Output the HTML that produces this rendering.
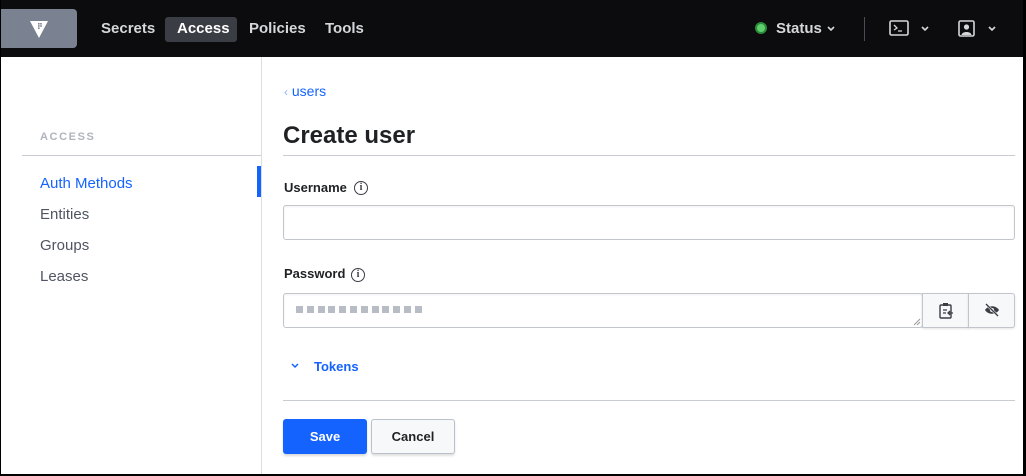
<!DOCTYPE html>
<html><head><style>
*{box-sizing:border-box;margin:0;padding:0}
body{width:1026px;height:476px;overflow:hidden;background:#fff;font-family:"Liberation Sans",sans-serif;position:relative}
.a{position:absolute}
.nav{left:0;top:0;width:1026px;height:57px;background:#0c0c0e}
.navt{color:#d5d7db;font-size:15px;font-weight:bold;top:20px}
.side{color:#4f5561;font-size:15px;left:40px}
.lbl{font-size:13px;font-weight:bold;color:#1f2124;left:284px}
.info{width:14px;height:14px;border:1.3px solid #3b3d45;border-radius:50%;font-size:10px;font-weight:bold;text-align:center;line-height:11px;color:#3b3d45;font-family:"Liberation Serif",serif}
.inp{border:1px solid #c2c5cb;border-radius:3px;background:#fff;box-shadow:inset 0 1px 2px rgba(0,0,0,.06)}
</style></head><body>
<div class="a nav"></div>
<div class="a" style="left:0;top:9px;width:77px;height:39px;background:#7a8291;border-radius:0 4px 4px 0"></div>
<svg class="a" style="left:29px;top:19px" width="20" height="20" viewBox="0 0 20 20"><path d="M1 2H19L10 19Z" fill="#fff"/><g fill="#7a8291"><rect x="9" y="4" width="1.6" height="1.6"/><rect x="11.2" y="4" width="1.6" height="1.6"/><rect x="9" y="6.2" width="1.6" height="1.6"/><rect x="11.2" y="6.2" width="1.6" height="1.6"/><rect x="9" y="8.4" width="1.6" height="1.6"/></g></svg>
<div class="a navt" style="left:101px">Secrets</div>
<div class="a" style="left:165px;top:17px;width:72px;height:25px;background:#3b3d45;border-radius:3px"></div>
<div class="a navt" style="left:177px;color:#fff">Access</div>
<div class="a navt" style="left:249px">Policies</div>
<div class="a navt" style="left:325px">Tools</div>
<div class="a" style="left:755px;top:22px;width:12px;height:12px;border-radius:50%;background:#5fcf6e;border:2px solid #2c8b3a"></div>
<div class="a navt" style="left:776px">Status</div>
<svg class="a" style="left:826px;top:25px" width="10" height="8"><path d="M2 2L5 5L8 2" stroke="#d5d7db" stroke-width="1.6" fill="none"/></svg>
<div class="a" style="left:864px;top:17px;width:1px;height:24px;background:#4a4d55"></div>
<svg class="a" style="left:889px;top:20px" width="20" height="17"><rect x="1" y="1" width="18" height="14" rx="1.5" stroke="#d5d7db" stroke-width="1.6" fill="none"/><path d="M5 5L8 8L5 10M9 11H13" stroke="#d5d7db" stroke-width="1.3" fill="none"/></svg>
<svg class="a" style="left:920px;top:25px" width="10" height="8"><path d="M2 2L5 5L8 2" stroke="#d5d7db" stroke-width="1.6" fill="none"/></svg>
<svg class="a" style="left:958px;top:20px" width="17" height="17"><rect x="1" y="1" width="15" height="15" rx="1.5" stroke="#d5d7db" stroke-width="1.6" fill="none"/><circle cx="8.5" cy="7" r="2.6" fill="#d5d7db"/><path d="M3.5 15C4 11 13 11 13.5 15Z" fill="#d5d7db"/></svg>
<svg class="a" style="left:987px;top:25px" width="10" height="8"><path d="M2 2L5 5L8 2" stroke="#d5d7db" stroke-width="1.6" fill="none"/></svg>

<div class="a" style="left:261px;top:57px;width:1px;height:419px;background:#dcdee2"></div>
<div class="a" style="left:40px;top:131px;font-size:11px;font-weight:bold;letter-spacing:1.6px;color:#b0b4bc">ACCESS</div>
<div class="a" style="left:22px;top:155px;width:239px;height:1px;background:#c9ccd2"></div>
<div class="a side" style="top:175px;color:#1563ff">Auth Methods</div>
<div class="a" style="left:257px;top:166px;width:4px;height:31px;background:#1563ff"></div>
<div class="a side" style="top:206px">Entities</div>
<div class="a side" style="top:237px">Groups</div>
<div class="a side" style="top:268px">Leases</div>

<div class="a" style="left:284px;top:83px;font-size:14px;color:#1563ff"><span style="color:#8ab1ff;font-size:12px">‹</span> users</div>
<div class="a" style="left:283px;top:122px;font-size:24px;font-weight:bold;color:#1f2124">Create user</div>
<div class="a" style="left:283px;top:155px;width:732px;height:1px;background:#c9ccd2"></div>
<div class="a lbl" style="top:180px">Username</div>
<div class="a info" style="left:354px;top:181px">i</div>
<div class="a inp" style="left:283px;top:205px;width:732px;height:35px"></div>
<div class="a lbl" style="top:266px">Password</div>
<div class="a info" style="left:351px;top:268px">i</div>
<div class="a inp" style="left:283px;top:293px;width:640px;height:35px"></div>
<div class="a" style="left:296px;top:306px;font-size:0">
<span style="display:inline-block;width:7px;height:7px;background:#b8bcc4;margin-right:3.8px"></span><span style="display:inline-block;width:7px;height:7px;background:#b8bcc4;margin-right:3.8px"></span><span style="display:inline-block;width:7px;height:7px;background:#b8bcc4;margin-right:3.8px"></span><span style="display:inline-block;width:7px;height:7px;background:#b8bcc4;margin-right:3.8px"></span><span style="display:inline-block;width:7px;height:7px;background:#b8bcc4;margin-right:3.8px"></span><span style="display:inline-block;width:7px;height:7px;background:#b8bcc4;margin-right:3.8px"></span><span style="display:inline-block;width:7px;height:7px;background:#b8bcc4;margin-right:3.8px"></span><span style="display:inline-block;width:7px;height:7px;background:#b8bcc4;margin-right:3.8px"></span><span style="display:inline-block;width:7px;height:7px;background:#b8bcc4;margin-right:3.8px"></span><span style="display:inline-block;width:7px;height:7px;background:#b8bcc4;margin-right:3.8px"></span><span style="display:inline-block;width:7px;height:7px;background:#b8bcc4;margin-right:3.8px"></span><span style="display:inline-block;width:7px;height:7px;background:#b8bcc4;margin-right:3.8px"></span>
</div>
<svg class="a" style="left:913px;top:318px" width="8" height="8"><path d="M1 7L7 1M4 7L7 4" stroke="#999" stroke-width="1"/></svg>
<div class="a" style="left:922px;top:293px;width:47px;height:35px;background:#f7f8fa;border:1px solid #c2c5cb;box-shadow:0 1px 2px rgba(0,0,0,.1)"></div>
<div class="a" style="left:968px;top:293px;width:47px;height:35px;background:#f7f8fa;border:1px solid #c2c5cb;border-radius:0 3px 3px 0;box-shadow:0 1px 2px rgba(0,0,0,.1)"></div>
<svg class="a" style="left:938px;top:302px" width="16" height="17"><rect x="2" y="3" width="11" height="13" rx="1" stroke="#3b3d45" stroke-width="1.4" fill="none"/><rect x="5" y="1" width="5" height="3" fill="#3b3d45"/><path d="M5 8H9M5 11H8M15 11H10M12 9L10 11L12 13" stroke="#3b3d45" stroke-width="1.3" fill="none"/></svg>
<svg class="a" style="left:984px;top:303px" width="16" height="14"><path d="M1 7C4 2 12 2 15 7C12 12 4 12 1 7Z" fill="#3b3d45"/><circle cx="8" cy="7" r="2" fill="#f7f8fa"/><path d="M2 1L14 13" stroke="#f7f8fa" stroke-width="2.5"/><path d="M2 1L14 13" stroke="#3b3d45" stroke-width="1.3"/></svg>
<svg class="a" style="left:290px;top:362px" width="10" height="8"><path d="M2 2L5 5L8 2" stroke="#1563ff" stroke-width="1.5" fill="none"/></svg>
<div class="a" style="left:314px;top:359px;font-size:13px;font-weight:bold;color:#1563ff">Tokens</div>
<div class="a" style="left:283px;top:400px;width:732px;height:1px;background:#c9ccd2"></div>
<div class="a" style="left:283px;top:419px;width:84px;height:35px;background:#1563ff;border-radius:3px;color:#fff;font-size:13px;font-weight:bold;text-align:center;line-height:35px;box-shadow:0 2px 2px rgba(0,0,0,.15)">Save</div>
<div class="a" style="left:371px;top:419px;width:84px;height:35px;background:#f7f8fa;border:1px solid #bac1cc;border-radius:3px;color:#1f2124;font-size:13px;font-weight:bold;text-align:center;line-height:33px;box-shadow:0 2px 2px rgba(0,0,0,.12)">Cancel</div>

<div class="a" style="left:0;top:0;width:1px;height:476px;background:#000"></div>
<div class="a" style="left:1023px;top:0;width:3px;height:476px;background:#000"></div>
<div class="a" style="left:0;top:474px;width:1026px;height:2px;background:#000"></div>
</body></html>
